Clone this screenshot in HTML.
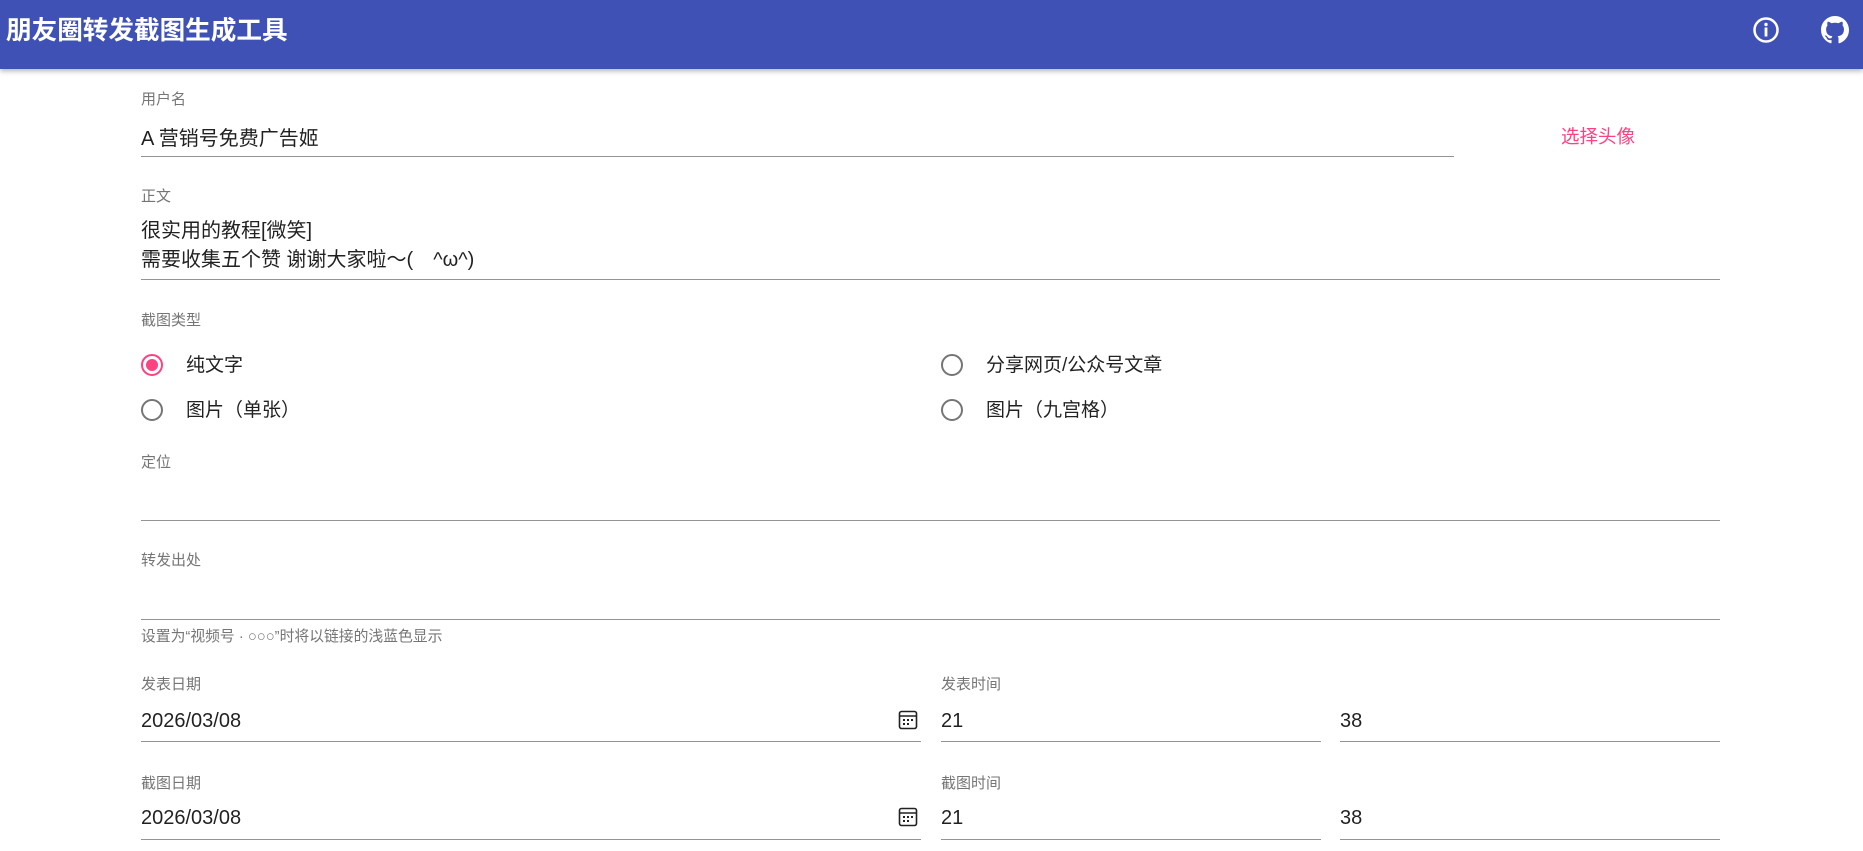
<!DOCTYPE html>
<html><head><meta charset="utf-8">
<style>
*{margin:0;padding:0;box-sizing:border-box}
body{width:1863px;height:851px;overflow:hidden;background:#fff;font-family:"Liberation Sans","Noto Sans CJK SC",sans-serif;position:relative}
.hdr{position:absolute;left:0;top:0;width:1863px;height:69px;background:#3f51b5;box-shadow:0 2px 5px rgba(0,0,0,.3)}
.title{position:absolute;left:6px;top:12px;font-size:25.6px;font-weight:bold;color:#fff;line-height:34px;font-family:"Noto Sans CJK SC",sans-serif}
.a{position:absolute;white-space:nowrap}
.lbl{font-size:15px;color:#757575;line-height:16px}
.val{font-size:20px;color:rgba(0,0,0,.87);line-height:24px}
.ul{position:absolute;height:1px;background:#949494}
.radio{position:absolute;width:22px;height:22px;border:2px solid #757575;border-radius:50%}
.radio.on{border-color:#ff4081}
.radio.on:after{content:"";position:absolute;left:3px;top:3px;width:12px;height:12px;border-radius:50%;background:#ff4081}
.rt{font-size:19px;color:rgba(0,0,0,.87);line-height:24px}
</style></head><body>
<div class="hdr">
<div class="title">朋友圈转发截图生成工具</div>
<svg class="a" style="left:1752px;top:16px" width="28" height="28" viewBox="0 0 28 28"><circle cx="14" cy="14" r="11.5" fill="none" stroke="#fff" stroke-width="2.5"/><circle cx="14" cy="8.5" r="1.7" fill="#fff"/><rect x="12.6" y="11.5" width="2.8" height="9" fill="#fff"/></svg>
<svg class="a" style="left:1821px;top:16px" width="28" height="28" viewBox="0 0 16 16"><path fill="#fff" d="M8 0C3.58 0 0 3.58 0 8c0 3.54 2.29 6.53 5.47 7.59.4.07.55-.17.55-.38 0-.19-.01-.82-.01-1.49-2.01.37-2.53-.49-2.69-.94-.09-.23-.48-.94-.82-1.13-.28-.15-.68-.52-.01-.53.63-.01 1.08.58 1.23.82.72 1.21 1.87.87 2.33.66.07-.52.28-.87.51-1.07-1.78-.2-3.64-.89-3.64-3.95 0-.87.31-1.59.82-2.15-.08-.2-.36-1.02.08-2.12 0 0 .67-.21 2.2.82.64-.18 1.32-.27 2-.27.68 0 1.36.09 2 .27 1.53-1.04 2.2-.82 2.2-.82.44 1.1.16 1.92.08 2.12.51.56.82 1.27.82 2.15 0 3.07-1.87 3.75-3.65 3.95.29.25.54.73.54 1.48 0 1.07-.01 1.93-.01 2.2 0 .21.15.46.55.38A8.013 8.013 0 0016 8c0-4.42-3.58-8-8-8z"/></svg>
</div>

<div class="a lbl" style="left:141px;top:92px">用户名</div>
<div class="a val" style="left:141px;top:127px">A 营销号免费广告姬</div>
<div class="ul" style="left:141px;top:156px;width:1313px"></div>
<div class="a" style="left:1561px;top:125px;font-size:18.5px;color:#ff4081;line-height:24px">选择头像</div>

<div class="a lbl" style="left:141px;top:189px">正文</div>
<div class="a val" style="left:141px;top:219px">很实用的教程[微笑]</div>
<div class="a val" style="left:141px;top:248px">需要收集五个赞 谢谢大家啦～(　^ω^)</div>
<div class="ul" style="left:141px;top:279px;width:1579px"></div>

<div class="a lbl" style="left:141px;top:313px">截图类型</div>
<div class="radio on" style="left:141px;top:354px"></div>
<div class="a rt" style="left:186px;top:354px">纯文字</div>
<div class="radio" style="left:941px;top:354px"></div>
<div class="a rt" style="left:986px;top:354px">分享网页/公众号文章</div>
<div class="radio" style="left:141px;top:399px"></div>
<div class="a rt" style="left:186px;top:399px">图片（单张）</div>
<div class="radio" style="left:941px;top:399px"></div>
<div class="a rt" style="left:986px;top:399px">图片（九宫格）</div>

<div class="a lbl" style="left:141px;top:455px">定位</div>
<div class="ul" style="left:141px;top:520px;width:1579px"></div>

<div class="a lbl" style="left:141px;top:553px">转发出处</div>
<div class="ul" style="left:141px;top:619px;width:1579px"></div>
<div class="a" style="left:141px;top:629px;font-size:14.8px;color:#757575;line-height:16px">设置为“视频号 · ○○○”时将以链接的浅蓝色显示</div>

<div class="a lbl" style="left:141px;top:677px">发表日期</div>
<div class="a val" style="left:141px;top:709px">2026/03/08</div>
<svg class="a" style="left:898px;top:710px" width="20" height="20" viewBox="0 0 20 20"><rect x="1.5" y="1.5" width="17" height="17" rx="2" fill="none" stroke="#222" stroke-width="1.6"/><line x1="1.5" y1="6" x2="18.5" y2="6" stroke="#222" stroke-width="1.6"/><g fill="#222"><rect x="5" y="9" width="2" height="2"/><rect x="9" y="9" width="2" height="2"/><rect x="13" y="9" width="2" height="2"/><rect x="5" y="13" width="2" height="2"/><rect x="9" y="13" width="2" height="2"/></g></svg>
<div class="ul" style="left:141px;top:741px;width:780px"></div>
<div class="a lbl" style="left:941px;top:677px">发表时间</div>
<div class="a val" style="left:941px;top:709px">21</div>
<div class="ul" style="left:941px;top:741px;width:380px"></div>
<div class="a val" style="left:1340px;top:709px">38</div>
<div class="ul" style="left:1340px;top:741px;width:380px"></div>

<div class="a lbl" style="left:141px;top:776px">截图日期</div>
<div class="a val" style="left:141px;top:806px">2026/03/08</div>
<svg class="a" style="left:898px;top:807px" width="20" height="20" viewBox="0 0 20 20"><rect x="1.5" y="1.5" width="17" height="17" rx="2" fill="none" stroke="#222" stroke-width="1.6"/><line x1="1.5" y1="6" x2="18.5" y2="6" stroke="#222" stroke-width="1.6"/><g fill="#222"><rect x="5" y="9" width="2" height="2"/><rect x="9" y="9" width="2" height="2"/><rect x="13" y="9" width="2" height="2"/><rect x="5" y="13" width="2" height="2"/><rect x="9" y="13" width="2" height="2"/></g></svg>
<div class="ul" style="left:141px;top:839px;width:780px"></div>
<div class="a lbl" style="left:941px;top:776px">截图时间</div>
<div class="a val" style="left:941px;top:806px">21</div>
<div class="ul" style="left:941px;top:839px;width:380px"></div>
<div class="a val" style="left:1340px;top:806px">38</div>
<div class="ul" style="left:1340px;top:839px;width:380px"></div>
</body></html>
